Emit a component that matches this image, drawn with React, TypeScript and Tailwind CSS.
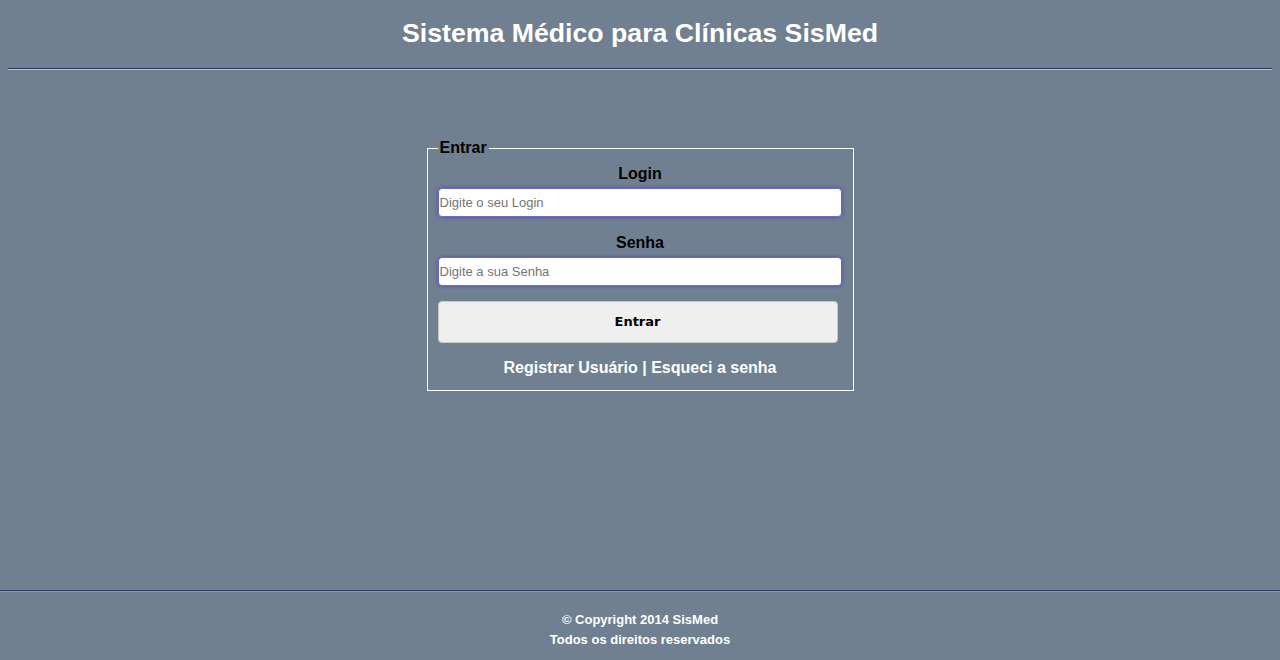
import React from "react";

export default function App() {
  return (
    <div className="min-h-[660px] h-[660px] bg-[#708090] flex flex-col font-['Liberation_Sans',Arial,sans-serif]">
      <header className="pt-[16px]">
        <h1 className="text-center text-white font-bold text-[26.7px] leading-[34px]">
          Sistema Médico para Clínicas SisMed
        </h1>
        <div className="mx-[8px] mt-[18px] border-t border-t-[#2b3a63] border-b border-b-[#b3bfdf]" />
      </header>

      <main className="flex-1 flex justify-center pt-[69px]">
        <fieldset className="w-[427px] border border-white px-[10px] pb-[13px] pt-0 self-start">
          <legend className="px-[2px] font-bold text-[16px] leading-[18px] text-black">Entrar</legend>
          <div className="flex flex-col">
            <label className="text-center font-bold text-[16px] leading-[18px] text-black mt-[8px]">Login</label>
            <input
              type="text"
              placeholder="Digite o seu Login"
              className="mt-[5px] w-[404px] h-[29px] bg-white rounded-[4px] border border-[#6b6bbf] shadow-[0_0_4px_#4b4bb8] px-[1px] text-[13px] text-black placeholder:text-[#757575] outline-none"
            />
            <label className="text-center font-bold text-[16px] leading-[18px] text-black mt-[17px]">Senha</label>
            <input
              type="password"
              placeholder="Digite a sua Senha"
              className="mt-[5px] w-[404px] h-[29px] bg-white rounded-[4px] border border-[#6b6bbf] shadow-[0_0_4px_#4b4bb8] px-[1px] text-[13px] text-black placeholder:text-[#757575] outline-none"
            />
            <button className="mt-[15px] w-[400px] h-[42px] bg-[#efefef] border border-[#c8c8c8] rounded-[4px] font-bold text-[13px] text-black font-['DejaVu_Sans',Verdana,sans-serif]">
              Entrar
            </button>
            <div className="mt-[16px] text-center font-bold text-[16px] leading-[18px] text-white">
              <a>Registrar Usuário</a> | <a>Esqueci a senha</a>
            </div>
          </div>
        </fieldset>
      </main>

      <footer className="h-[70px] border-t border-t-[#2b3a63] pt-[20px]">
        <div className="border-t border-t-[#8a98b8] -mt-[20px] mb-[18px]" />
        <p className="text-center text-white font-bold text-[13px] leading-[20px]">© Copyright 2014 SisMed</p>
        <p className="text-center text-white font-bold text-[13px] leading-[20px]">Todos os direitos reservados</p>
      </footer>
    </div>
  );
}
